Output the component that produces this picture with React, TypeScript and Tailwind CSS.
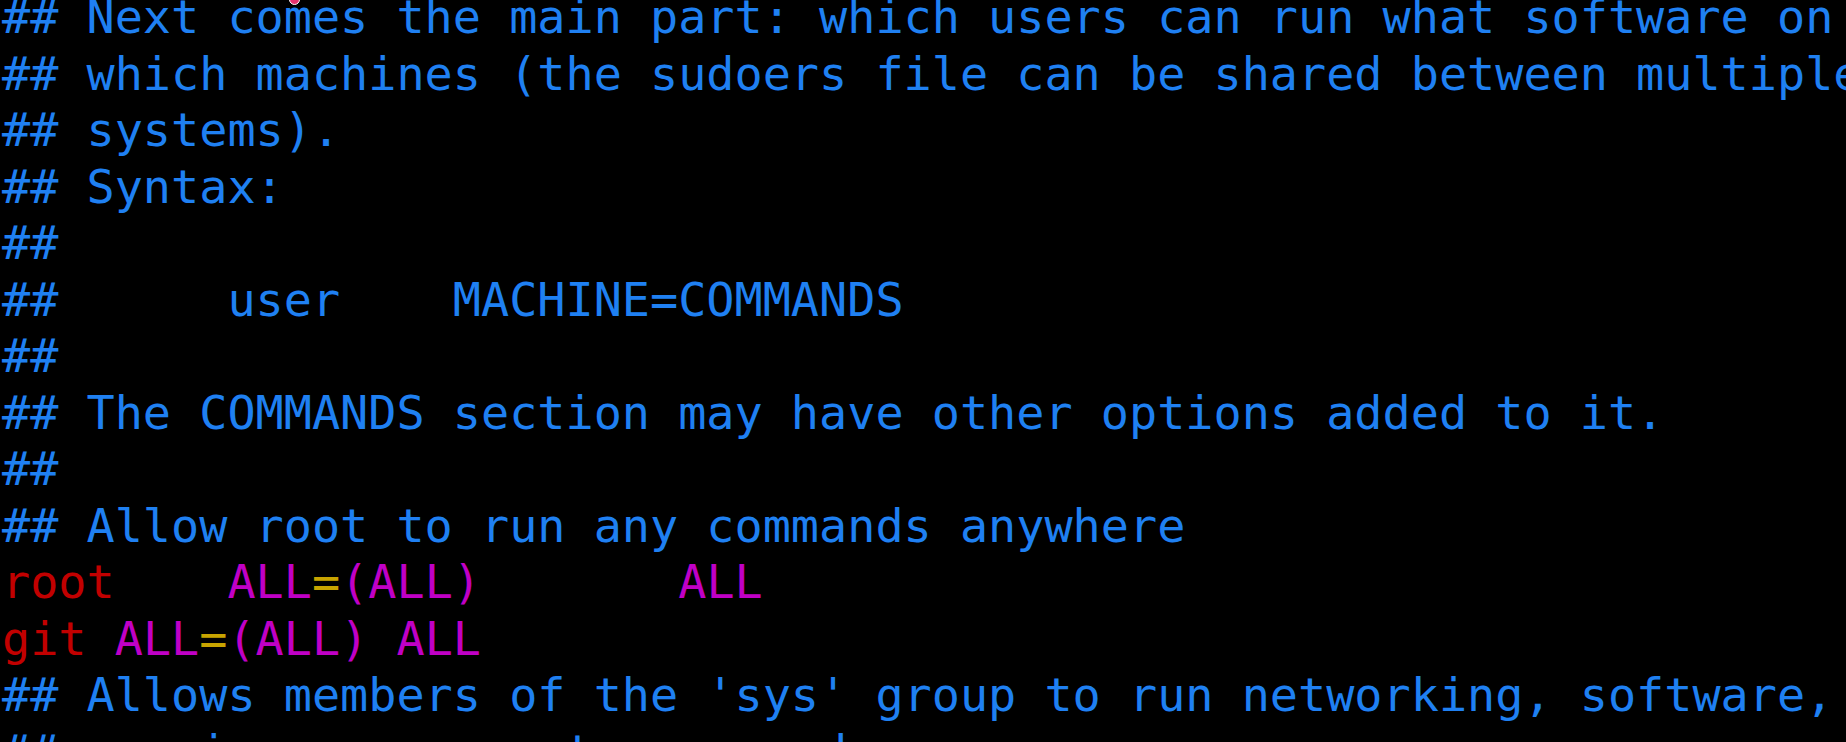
import React from "react";

// vim-style sudoers excerpt, colours taken from the terminal theme
type Seg = { t: string; c: string };

const blue = "text-[#1f80f2]";
const red = "text-[#c20000]";
const mag = "text-[#c000c6]";
const yel = "text-[#c8a400]";

const c = (t: string): Seg[] => [{ t, c: blue }];

const lines: Seg[][] = [
  c("## Next comes the main part: which users can run what software on"),
  c("## which machines (the sudoers file can be shared between multiple"),
  c("## systems)."),
  c("## Syntax:"),
  c("##"),
  c("##      user    MACHINE=COMMANDS"),
  c("##"),
  c("## The COMMANDS section may have other options added to it."),
  c("##"),
  c("## Allow root to run any commands anywhere"),
  [
    { t: "root", c: red },
    { t: "    ", c: blue },
    { t: "ALL", c: mag },
    { t: "=", c: yel },
    { t: "(ALL)       ALL", c: mag },
  ],
  [
    { t: "git", c: red },
    { t: " ", c: blue },
    { t: "ALL", c: mag },
    { t: "=", c: yel },
    { t: "(ALL) ALL", c: mag },
  ],
  c("## Allows members of the 'sys' group to run networking, software,"),
  c("## service management apps and more."),
];

export default function App() {
  return (
    <div className="relative w-[1846px] h-[742px] overflow-hidden bg-black">
      <div className="mt-[-11px] pl-[2px] font-['DejaVu_Sans_Mono',monospace] text-[46.8px] leading-[56.5px] whitespace-pre">
        {lines.map((segs, i) => (
          <div key={i}>
            {segs.map((s, j) => (
              <span key={j} className={s.c}>
                {s.t}
              </span>
            ))}
          </div>
        ))}
      </div>
      <span className="absolute left-[289px] top-[-6px] w-[11px] h-[11px] rounded-full bg-[#e8336d] border border-white" />
    </div>
  );
}
